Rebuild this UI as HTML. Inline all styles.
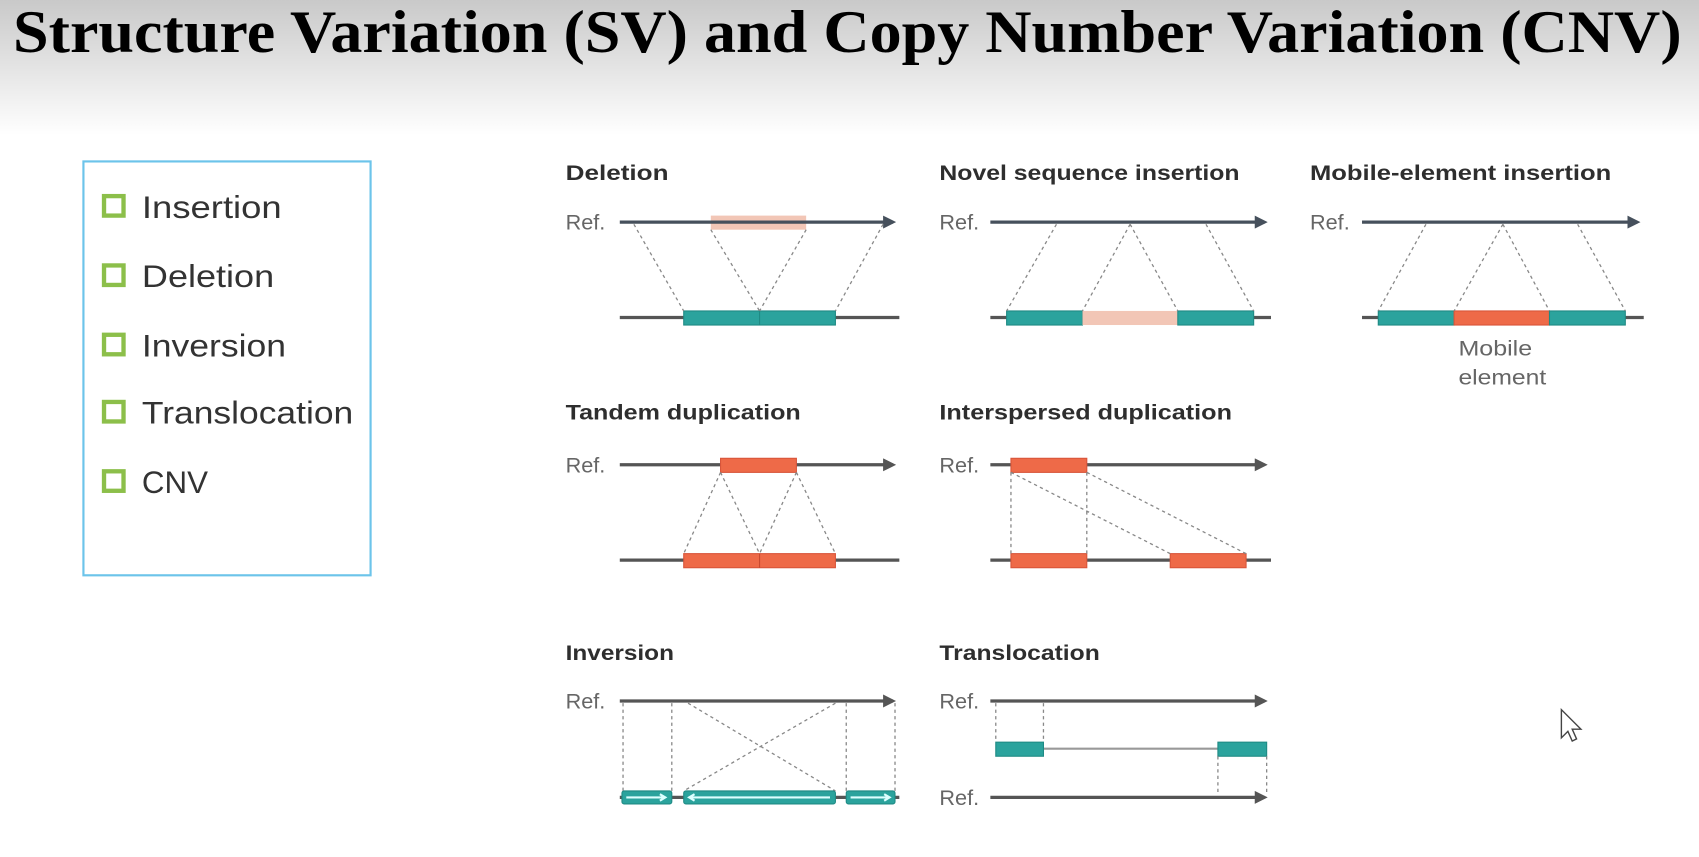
<!DOCTYPE html>
<html><head><meta charset="utf-8"><style>
html,body{margin:0;padding:0;background:#fff;width:1699px;height:857px;overflow:hidden}
svg{display:block}
.h{font-family:"Liberation Sans",sans-serif;font-weight:bold;font-size:20px;fill:#2e2e2e}
.r{font-family:"Liberation Sans",sans-serif;font-size:20px;fill:#666}
.li{font-family:"Liberation Sans",sans-serif;font-size:29px;fill:#333}
.ref{stroke:#46505c;stroke-width:3}
.bl{stroke:#555;stroke-width:3}
.d{stroke:#888;stroke-width:1.2;stroke-dasharray:3 3;fill:none}
.t{fill:#2ba39d;stroke:#1f8a84;stroke-width:1}
.o{fill:#ee6a48;stroke:#d8553a;stroke-width:1}
.p{fill:#f2c6b6}
</style></head><body>
<svg width="1699" height="857" viewBox="0 0 1568 791" preserveAspectRatio="none">
<defs>
<linearGradient id="g" x1="0" y1="0" x2="0" y2="1">
<stop offset="0" stop-color="#c9c9c9"/><stop offset="0.5" stop-color="#e4e4e4"/><stop offset="1" stop-color="#ffffff"/>
</linearGradient>
<marker id="a" markerWidth="12" markerHeight="12" refX="9" refY="6" orient="auto" markerUnits="userSpaceOnUse"><path d="M0,0 L12,6 L0,12 z" fill="#46505c"/></marker>
<marker id="a2" markerWidth="12" markerHeight="12" refX="9" refY="6" orient="auto" markerUnits="userSpaceOnUse"><path d="M0,0 L12,6 L0,12 z" fill="#555"/></marker>
</defs>
<rect x="0" y="0" width="1568" height="125" fill="url(#g)"/>
<text x="12" y="48" textLength="1540" lengthAdjust="spacingAndGlyphs" font-family="Liberation Serif,serif" font-weight="bold" font-size="56" fill="#000">Structure Variation (SV) and Copy Number Variation (CNV)</text>

<rect x="77" y="149" width="265" height="382" fill="#fff" stroke="#6cc4ea" stroke-width="2"/>
<g fill="none" stroke="#8cbf4a" stroke-width="4">
<rect x="96" y="181" width="18" height="18"/><rect x="96" y="245" width="18" height="18"/><rect x="96" y="309" width="18" height="18"/><rect x="96" y="371" width="18" height="18"/><rect x="96" y="435" width="18" height="18"/>
</g>
<text class="li" x="131" y="201" textLength="129" lengthAdjust="spacingAndGlyphs">Insertion</text>
<text class="li" x="131" y="265" textLength="122" lengthAdjust="spacingAndGlyphs">Deletion</text>
<text class="li" x="131" y="329" textLength="133" lengthAdjust="spacingAndGlyphs">Inversion</text>
<text class="li" x="131" y="391" textLength="195" lengthAdjust="spacingAndGlyphs">Translocation</text>
<text class="li" x="131" y="455" textLength="61" lengthAdjust="spacingAndGlyphs">CNV</text>

<!-- Deletion -->
<text class="h" x="522" y="166" textLength="95" lengthAdjust="spacingAndGlyphs">Deletion</text>
<text class="r" x="522" y="212">Ref.</text>
<rect class="p" x="656" y="199" width="88" height="13"/>
<line class="ref" x1="572" y1="205" x2="824" y2="205" marker-end="url(#a)"/>
<line class="bl" x1="572" y1="293" x2="830" y2="293"/>
<rect class="t" x="631" y="287" width="140" height="13"/><line x1="701" y1="287" x2="701" y2="300" stroke="#1f8a84"/>
<path class="d" d="M585,207 L631,287 M656,212 L701,287 M744,212 L701,287 M815,207 L771,287"/>

<!-- Novel -->
<text class="h" x="867" y="166" textLength="277" lengthAdjust="spacingAndGlyphs">Novel sequence insertion</text>
<text class="r" x="867" y="212">Ref.</text>
<line class="ref" x1="914" y1="205" x2="1167" y2="205" marker-end="url(#a)"/>
<line class="bl" x1="914" y1="293" x2="1173" y2="293"/>
<rect class="t" x="929" y="287" width="70" height="13"/><rect class="p" x="999" y="287" width="88" height="13"/><rect class="t" x="1087" y="287" width="70" height="13"/>
<path class="d" d="M975,207 L929,287 M1043,207 L999,287 M1043,207 L1087,287 M1113,207 L1157,287"/>

<!-- Mobile -->
<text class="h" x="1209" y="166" textLength="278" lengthAdjust="spacingAndGlyphs">Mobile-element insertion</text>
<text class="r" x="1209" y="212">Ref.</text>
<line class="ref" x1="1257" y1="205" x2="1511" y2="205" marker-end="url(#a)"/>
<line class="bl" x1="1257" y1="293" x2="1517" y2="293"/>
<rect class="t" x="1272" y="287" width="70" height="13"/><rect class="o" x="1342" y="287" width="88" height="13"/><rect class="t" x="1430" y="287" width="70" height="13"/>
<path class="d" d="M1316,207 L1272,287 M1387,207 L1342,287 M1387,207 L1430,287 M1456,207 L1500,287"/>
<text class="r" x="1346" y="328" font-size="19" textLength="68" lengthAdjust="spacingAndGlyphs">Mobile</text>
<text class="r" x="1346" y="355" font-size="19" textLength="81" lengthAdjust="spacingAndGlyphs">element</text>

<!-- Tandem -->
<text class="h" x="522" y="387" textLength="217" lengthAdjust="spacingAndGlyphs">Tandem duplication</text>
<text class="r" x="522" y="436">Ref.</text>
<line class="bl" x1="572" y1="429" x2="824" y2="429" marker-end="url(#a2)"/>
<rect class="o" x="665" y="423" width="70" height="13"/>
<line class="bl" x1="572" y1="517" x2="830" y2="517"/>
<rect class="o" x="631" y="511" width="140" height="13"/><line x1="701" y1="511" x2="701" y2="524" stroke="#c84a30"/>
<path class="d" d="M665,436 L631,511 M665,436 L701,511 M735,436 L701,511 M735,436 L771,511"/>

<!-- Interspersed -->
<text class="h" x="867" y="387" textLength="270" lengthAdjust="spacingAndGlyphs">Interspersed duplication</text>
<text class="r" x="867" y="436">Ref.</text>
<line class="bl" x1="914" y1="429" x2="1167" y2="429" marker-end="url(#a2)"/>
<rect class="o" x="933" y="423" width="70" height="13"/>
<line class="bl" x1="914" y1="517" x2="1173" y2="517"/>
<rect class="o" x="933" y="511" width="70" height="13"/><rect class="o" x="1080" y="511" width="70" height="13"/>
<path class="d" d="M933,436 L933,511 M1003,436 L1003,511 M933,436 L1080,511 M1003,436 L1150,511"/>

<!-- Inversion -->
<text class="h" x="522" y="609" textLength="100" lengthAdjust="spacingAndGlyphs">Inversion</text>
<text class="r" x="522" y="654">Ref.</text>
<line class="bl" x1="572" y1="647" x2="824" y2="647" marker-end="url(#a2)"/>
<line class="bl" x1="572" y1="736" x2="830" y2="736"/>
<path class="d" d="M575,649 L575,730 M620,649 L620,730 M781,649 L781,730 M826,649 L826,730 M635,649 L771,730 M771,649 L631,730"/>
<rect class="t" x="574" y="730" width="46" height="12" rx="2"/><rect class="t" x="631" y="730" width="140" height="12" rx="2"/><rect class="t" x="781" y="730" width="45" height="12" rx="2"/>
<g stroke="#dff" stroke-width="2" fill="none"><path d="M578,736 H614 M609,733 L614,736 L609,739"/><path d="M766,736 H636 M641,733 L636,736 L641,739"/><path d="M785,736 H821 M816,733 L821,736 L816,739"/></g>

<!-- Translocation -->
<text class="h" x="867" y="609" textLength="148" lengthAdjust="spacingAndGlyphs">Translocation</text>
<text class="r" x="867" y="654">Ref.</text>
<line class="bl" x1="914" y1="647" x2="1167" y2="647" marker-end="url(#a2)"/>
<line x1="963" y1="691" x2="1124" y2="691" stroke="#999" stroke-width="2"/>
<rect class="t" x="919" y="685" width="44" height="13"/><rect class="t" x="1124" y="685" width="45" height="13"/>
<path class="d" d="M919,649 L919,685 M963,649 L963,685 M1124,698 L1124,734 M1169,698 L1169,734"/>
<text class="r" x="867" y="743">Ref.</text>
<line class="bl" x1="914" y1="736" x2="1167" y2="736" marker-end="url(#a2)"/>

<!-- cursor -->
<path d="M1441,655 L1441,681 L1447,675 L1451,684 L1455,682 L1451,673 L1459,673 Z" fill="#fff" stroke="#444" stroke-width="1.3"/>
</svg>
</body></html>
